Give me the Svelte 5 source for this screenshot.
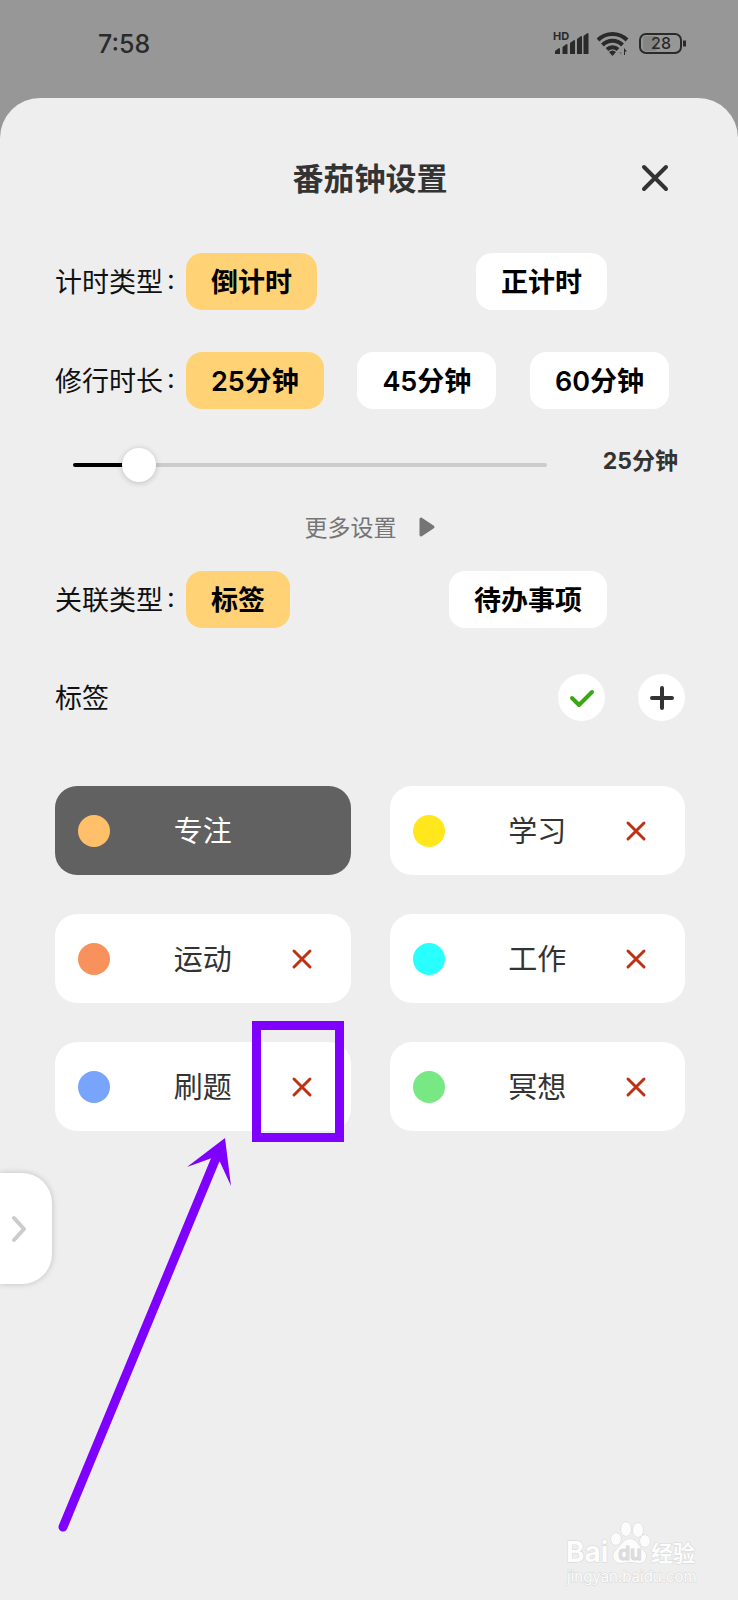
<script>
	let timerTypes = ['倒计时', '正计时']
	let timerType = '倒计时'

	let durations = [25, 45, 60]
	let minutes = 25
	const min = 5
	const max = 185

	let linkTypes = ['标签', '待办事项']
	let linkType = '标签'

	let activeTag = '专注'
	let tags = [
		{ name: '专注', color: '#ffc069' },
		{ name: '学习', color: '#ffe71c' },
		{ name: '运动', color: '#f8915c' },
		{ name: '工作', color: '#29ffff' },
		{ name: '刷题', color: '#78a5fb', marked: true },
		{ name: '冥想', color: '#78e884' },
	]

	$: progress = ((minutes - min) / (max - min)) * 100

	function removeTag(name) {
		tags = tags.filter(tag => tag.name !== name)
	}
</script>

<div class="page">
	<div class="status">
		<span class="time">7:58</span>
		<svg class="indicators" width="134" height="30" viewBox="0 0 134 30" aria-hidden="true">
			<text class="hd" x="0" y="11">HD</text>
			<g fill="#2a2a2a">
				<path d="M2 25v-3l4-3q1 0 1 1v5z" />
				<path d="M9.500 25v-7l4-3q1 0 1 1v9z" />
				<path d="M17 25V14l4-3q1 0 1 1v13z" />
				<path d="M24 25V10l4-3q1 0 1 1v17z" />
				<path d="M30.500 25V7l4-3q1 0 1 1v20z" />
			</g>
			<g fill="none" stroke="#2a2a2a" stroke-width="4">
				<path d="M45 11a20.500 20.500 0 0 1 29 0" />
				<path d="M49.500 16a14 14 0 0 1 20 0" />
				<path d="M54 20.500a8 8 0 0 1 11 0" />
			</g>
			<path d="M56 23q3.500-3 7 0L59.500 27z" fill="#2a2a2a" />
			<path d="M68.500 19v7l-3-3h3" fill="#777" />
			<path d="M71 26v-7l3 3.500h-2V26z" fill="#2a2a2a" />
			<rect x="90" y="7" width="14" height="15" rx="3" fill="#858585" />
			<rect x="87" y="5" width="41" height="19" rx="6" fill="none" stroke="#2a2a2a" stroke-width="2" />
			<path d="M131.500 11.500v6" stroke="#2a2a2a" stroke-width="3" />
			<text class="level" x="108" y="20" text-anchor="middle">28</text>
		</svg>
	</div>

	<main class="sheet">
		<header>
			<h1>番茄钟设置</h1>
			<button class="close" aria-label="关闭">
				<svg width="28" height="28" viewBox="0 0 28 28">
					<path d="M3 3l22 22M25 3L3 25" />
				</svg>
			</button>
		</header>

		<div class="row">
			<span class="label">计时类型<i>:</i></span>
			<div class="options">
				{#each timerTypes as type}
					<button class="pill" class:active={timerType === type} on:click={() => (timerType = type)}>{type}</button>
				{/each}
			</div>
		</div>

		<div class="row">
			<span class="label">修行时长<i>:</i></span>
			<div class="options wide">
				{#each durations as duration}
					<button class="pill" class:active={minutes === duration} on:click={() => (minutes = duration)}>{duration}分钟</button>
				{/each}
			</div>
		</div>

		<div class="slider">
			<input
				type="range"
				id="minutes"
				aria-label="修行时长"
				{min}
				{max}
				bind:value={minutes}
				style="--progress: {progress}%"
			/>
			<output for="minutes">{minutes}分钟</output>
		</div>

		<button class="more">
			<span>更多设置</span>
			<svg width="18" height="22" viewBox="0 0 18 22" aria-hidden="true">
				<path d="M3 3l12 8-12 8z" />
			</svg>
		</button>

		<div class="row">
			<span class="label">关联类型<i>:</i></span>
			<div class="options">
				{#each linkTypes as type}
					<button class="pill" class:active={linkType === type} on:click={() => (linkType = type)}>{type}</button>
				{/each}
			</div>
		</div>

		<div class="tag-bar">
			<h2>标签</h2>
			<button class="round" aria-label="完成">
				<svg width="28" height="28" viewBox="0 0 28 28">
					<path d="M4 14l7 7L24 8" stroke="#38a814" />
				</svg>
			</button>
			<button class="round" aria-label="添加">
				<svg width="28" height="28" viewBox="0 0 28 28">
					<path d="M14 4v20M4 14h20" stroke="#333" />
				</svg>
			</button>
		</div>

		<div class="tags">
			{#each tags as tag (tag.name)}
				<div class="tag" class:selected={activeTag === tag.name}>
					<span class="dot" style="background: {tag.color}"></span>
					<button class="name" on:click={() => (activeTag = tag.name)}>{tag.name}</button>
					{#if activeTag !== tag.name}
						<button class="remove" aria-label="删除{tag.name}" on:click={() => removeTag(tag.name)}>
							<svg width="22" height="22" viewBox="0 0 22 22">
								<path d="M3 3l16 16M19 3L3 19" />
							</svg>
						</button>
					{/if}
					{#if tag.marked}
						<!-- pointer to the delete button -->
						<svg class="hint" width="296" height="520" viewBox="0 0 296 520" aria-hidden="true">
							<rect x="201.500" y="7.500" width="83" height="112" fill="none" stroke="#8000ff" stroke-width="9" />
							<path d="M8 509L161 140" stroke="#8000ff" stroke-width="9" stroke-linecap="round" />
							<path d="M170 120l-38 29 25-9 8 4 11 24z" fill="#8000ff" />
						</svg>
					{/if}
				</div>
			{/each}
		</div>
	</main>

	<button class="drawer" aria-label="展开">
		<svg width="16" height="28" viewBox="0 0 16 28">
			<path d="M4 3l10 11L4 25" />
		</svg>
	</button>

	<svg class="watermark" width="134" height="72" viewBox="0 0 134 72" aria-hidden="true">
		<g class="mark">
			<text class="brand" x="0" y="42">Bai</text>
			<ellipse cx="50" cy="19" rx="5" ry="6" />
			<ellipse cx="60" cy="9" rx="5" ry="7" />
			<ellipse cx="72" cy="10" rx="5" ry="7" />
			<ellipse cx="79" cy="21" rx="5" ry="6" />
			<path d="M64 19c7 0 9 8 13 11 6 5 3 13-4 13-3 0-6-1-9-1s-6 1-9 1c-8 0-10-8-5-13 4-3 7-11 14-11z" />
			<text class="du" x="64" y="40" text-anchor="middle">du</text>
			<text class="cn" x="85" y="41">经验</text>
			<text class="url" x="1" y="62">jingyan.baidu.com</text>
		</g>
	</svg>
</div>

<style>
	:global(body) {
		margin: 0;
		background: #979797;
	}

	.page {
		position: relative;
		display: flex;
		flex-direction: column;
		min-height: 100vh;
		overflow: hidden;
		font-family: Inter, 'Noto Sans CJK SC', sans-serif;
		color: #111;
		background: #979797;
	}

	button {
		padding: 0;
		border: 0;
		font-family: inherit;
		color: inherit;
		background: none;
		cursor: pointer;
	}

	h1,
	h2 {
		margin: 0;
	}

	svg {
		display: block;
	}

	.status {
		display: flex;
		align-items: center;
		justify-content: space-between;
		height: 88px;
		padding: 0 51px 0 98px;
		margin-bottom: 10px;
	}

	.time {
		font-size: 25px;
		font-weight: 500;
		color: #2a2a2a;
	}

	.indicators {
		fill: #2a2a2a;
	}

	.hd {
		font-size: 11px;
		font-weight: 700;
	}

	.level {
		font-size: 16px;
		font-weight: 500;
	}

	.sheet {
		flex: 1;
		padding: 50px 53px 0 55px;
		background: #eee;
		border-radius: 40px 40px 0 0;
	}

	header {
		display: grid;
		grid-template-columns: 1fr auto 1fr;
		align-items: center;
		height: 60px;
		margin-bottom: 45px;
	}

	h1 {
		grid-column: 2;
		padding-bottom: 4px;
		font-size: 31px;
		font-weight: 700;
		color: #333;
	}

	.close {
		justify-self: end;
		display: grid;
		place-content: center;
		width: 60px;
		height: 60px;

		& path {
			stroke: #333;
			stroke-width: 4;
			stroke-linecap: round;
		}
	}

	.row {
		display: flex;
		align-items: center;
	}

	.row + .row {
		margin-top: 42px;
	}

	.label {
		display: flex;
		flex: none;
		width: 131px;
		padding-bottom: 2px;
		font-size: 27px;

		& i {
			margin-left: 4px;
			padding-top: 2px;
			font-style: normal;
		}
	}

	.options {
		display: flex;
		flex: 1;
		justify-content: space-between;
		padding-right: 78px;
	}

	.options.wide {
		padding-right: 16px;
	}

	.pill {
		height: 57px;
		padding: 0 25px 2px;
		font-size: 27px;
		font-weight: 700;
		color: #000;
		background: #fff;
		border-radius: 16px;
	}

	.options.wide .pill {
		font-weight: 600;
	}

	.pill.active {
		background: #ffd375;
	}

	.slider {
		display: flex;
		gap: 56px;
		height: 50px;
		margin: 31px 7px 20px 18px;
	}

	input {
		flex: 1;
		min-width: 0;
		height: 50px;
		margin: 0;
		appearance: none;
		background: none;
	}

	input::-webkit-slider-runnable-track {
		height: 4px;
		background: linear-gradient(to right, #000 var(--progress), #ccc var(--progress));
		border-radius: 2px;
	}

	input::-webkit-slider-thumb {
		appearance: none;
		width: 34px;
		height: 34px;
		margin-top: -15px;
		background: #fff;
		border-radius: 50%;
		box-shadow: 0 1px 6px rgb(0 0 0 / 0.2);
	}

	output {
		font-size: 23px;
		font-weight: 700;
		line-height: 42px;
		color: #333;
	}

	.more {
		display: flex;
		align-items: center;
		gap: 21px;
		height: 34px;
		margin: 0 auto 27px;
		font-size: 23px;
		color: #757575;

		& span {
			padding-bottom: 2px;
		}

		& path {
			fill: #757575;
			stroke: #757575;
			stroke-width: 3;
			stroke-linejoin: round;
		}
	}

	.tag-bar {
		display: flex;
		align-items: center;
		gap: 33px;
		margin: 46px 0 65px;
	}

	h2 {
		flex: 1;
		padding-bottom: 2px;
		font-size: 27px;
		font-weight: 400;
	}

	.round {
		display: grid;
		place-content: center;
		width: 47px;
		height: 47px;
		background: #fff;
		border-radius: 50%;

		& path {
			fill: none;
			stroke-width: 4;
			stroke-linecap: round;
			stroke-linejoin: round;
		}
	}

	.tags {
		display: grid;
		grid-template-columns: 1fr 1fr;
		gap: 39px;
	}

	.tag {
		position: relative;
		display: grid;
		grid-template-columns: 32px 1fr 32px;
		align-items: center;
		height: 89px;
		padding: 0 23px;
		box-sizing: border-box;
		color: #333;
		background: #fff;
		border-radius: 22px;
	}

	.tag.selected {
		color: #fff;
		background: #616161;
	}

	.dot {
		width: 32px;
		height: 32px;
		border-radius: 50%;
	}

	.name {
		height: 89px;
		padding-bottom: 3px;
		font-size: 29px;
	}

	.remove {
		display: grid;
		place-content: center;
		height: 48px;
		margin-left: -20px;

		& path {
			stroke: #bd3214;
			stroke-width: 3;
			stroke-linecap: round;
		}
	}

	.hint {
		position: absolute;
		top: -24px;
		left: 0;
		pointer-events: none;
	}

	.drawer {
		position: absolute;
		top: 1173px;
		left: 0;
		display: flex;
		align-items: center;
		width: 52px;
		height: 111px;
		padding-left: 10px;
		background: #fff;
		border-radius: 0 30px 30px 0;
		box-shadow: 0 0 6px rgb(0 0 0 / 0.2);

		& path {
			fill: none;
			stroke: #ccc;
			stroke-width: 4;
			stroke-linecap: round;
			stroke-linejoin: round;
		}
	}

	.watermark {
		position: absolute;
		right: 38px;
		bottom: 8px;
	}

	.mark {
		fill: #fcfcfc;
		stroke: #d6d6d6;
		stroke-width: 1;
		paint-order: stroke;
	}

	.brand {
		font-size: 28px;
		font-weight: 700;
	}

	.du {
		font-size: 19px;
		font-weight: 600;
		fill: #ddd;
	}

	.cn {
		font-size: 22px;
		font-weight: 700;
	}

	.url {
		font-size: 15px;
	}
</style>
